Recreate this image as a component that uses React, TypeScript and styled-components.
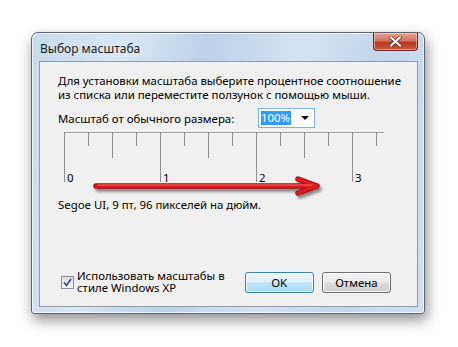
import styled, { createGlobalStyle } from "styled-components";

const GlobalStyle = createGlobalStyle`
  html, body {
    margin: 0;
    background: #ffffff;
  }
  body {
    font-family: "Noto Sans", "Open Sans", sans-serif;
    font-size: 11.4px;
    color: #000;
  }
`;

const Desktop = styled.div`
  width: 458px;
  height: 347px;
  box-sizing: border-box;
  padding: 32px 0 0 31px;
  overflow: hidden;
`;

const Window = styled.div`
  width: 394px;
  height: 282px;
  box-sizing: border-box;
  display: flex;
  flex-direction: column;
  border: 1px solid #5c6672;
  border-radius: 7px 7px 3px 3px;
  background: linear-gradient(
    100deg,
    #c9d9ea 0%,
    #dbe7f3 22%,
    #bcd0e6 40%,
    #d6e3f1 62%,
    #c3d5e9 80%,
    #d2e0ef 100%
  );
  box-shadow: inset 0 0 0 1px rgba(255, 255, 255, 0.7),
    2px 6px 14px rgba(0, 0, 0, 0.45);
`;

const TitleBar = styled.div`
  height: 28px;
  display: flex;
  justify-content: space-between;
  align-items: flex-start;
  padding-left: 8px;
`;

const Title = styled.span`
  margin-top: 7px;
  font-size: 12px;
  color: #1e1e1e;
`;

const CloseButton = styled.div`
  width: 45px;
  height: 18px;
  margin-right: 6px;
  box-sizing: border-box;
  border: 1px solid #6e2a26;
  border-top: none;
  border-radius: 0 0 4px 4px;
  background: linear-gradient(#e4a497 0%, #d1735f 45%, #b73a22 55%, #c8553b 100%);
  box-shadow: inset 0 0 0 1px rgba(255, 220, 210, 0.5);
  display: flex;
  align-items: center;
  justify-content: center;
`;

const Client = styled.div`
  flex: 1;
  margin: 0 6px 6px 7px;
  border: 1px solid #8b9cb4;
  background: #f0f0f0;
  display: flex;
  flex-direction: column;
  padding: 12px 18px 12px 18px;
  white-space: nowrap;
`;

const Paragraph = styled.div`
  line-height: 14px;
`;

const ScaleRow = styled.div`
  display: flex;
  align-items: center;
  margin-top: 6px;
  height: 20px;
`;

const ScaleLabel = styled.span`
  width: 200px;
`;

const Combo = styled.div`
  width: 57px;
  height: 20px;
  box-sizing: border-box;
  border: 1px solid #7eb4ea;
  background: #fff;
  display: flex;
  align-items: center;
  padding-left: 2px;
`;

const Selected = styled.span`
  background: #3399ff;
  color: #fff;
  line-height: 14px;
  padding-right: 1px;
`;

const DropArrow = styled.span`
  margin-left: auto;
  margin-right: 5px;
  width: 0;
  height: 0;
  border-left: 4px solid transparent;
  border-right: 4px solid transparent;
  border-top: 4px solid #000;
`;

const RulerArea = styled.div`
  position: relative;
  margin: 4px 0 0 6px;
  height: 65px;
`;

const ArrowOverlay = styled.svg`
  position: absolute;
  left: 28px;
  top: 42px;
`;

const Info = styled.div`
  line-height: 15px;
`;

const Spacer = styled.div`
  flex: 1;
`;

const BottomRow = styled.div`
  display: flex;
  align-items: center;
`;

const CheckLabel = styled.label`
  display: flex;
  align-items: center;
  gap: 3px;
  width: 191px;
  margin-left: 3px;
`;

const CheckText = styled.div`
  display: flex;
  flex-direction: column;
  line-height: 12px;
`;

const CheckBox = styled.span`
  width: 13px;
  height: 13px;
  box-sizing: border-box;
  flex-shrink: 0;
  border: 1px solid #8e8f9f;
  background: linear-gradient(#dcdde4, #f6f6f8);
  display: flex;
  align-items: center;
  justify-content: center;
`;

const Button = styled.button<{ $default?: boolean }>`
  width: 72px;
  height: 21px;
  margin-right: 8px;
  font-family: inherit;
  font-size: 11.4px;
  color: #000;
  border-radius: 3px;
  border: 1px solid ${(p) => (p.$default ? "#3c7fb1" : "#707070")};
  background: ${(p) =>
    p.$default
      ? "linear-gradient(#eaf6fd 0%, #d9f0fc 49%, #bee6fd 51%, #a7d9f5 100%)"
      : "linear-gradient(#f2f2f2 0%, #ebebeb 49%, #dddddd 51%, #cfcfcf 100%)"};
  box-shadow: inset 0 0 0 1px rgba(255, 255, 255, 0.8);
  padding: 0;
`;

const ticks = Array.from({ length: 14 }, (_, i) => i);

function Ruler() {
  return (
    <svg width="322" height="60">
      <line x1="0" y1="0.5" x2="320" y2="0.5" stroke="#a4a4a4" />
      {ticks.map((i) => {
        const x = i * 24 + 0.5;
        const h = i % 4 === 0 ? 50 : i % 2 === 0 ? 26 : 14;
        return <line key={i} x1={x} y1="0" x2={x} y2={h} stroke="#8e8e8e" />;
      })}
      {[0, 1, 2, 3].map((n) => (
        <text
          key={n}
          x={n * 96 + 3}
          y="50"
          fontSize="11.4"
          fontFamily="Noto Sans, sans-serif"
          fill="#000"
        >
          {n}
        </text>
      ))}
    </svg>
  );
}

function Arrow() {
  return (
    <ArrowOverlay width="240" height="30">
      <defs>
        <filter id="sh" x="-10%" y="-50%" width="120%" height="200%">
          <feDropShadow dx="2" dy="3" stdDeviation="1.6" floodColor="#000" floodOpacity="0.45" />
        </filter>
      </defs>
      <g filter="url(#sh)" fill="none" strokeLinecap="round" strokeLinejoin="round">
        <path d="M4 12 H224 M206 5 L225 12 L206 19" stroke="#a00c10" strokeWidth="5.5" />
        <path d="M4 12 H224 M206 5 L225 12 L206 19" stroke="#dd1a1e" strokeWidth="3.5" />
        <path d="M6 11 H220" stroke="#f06a6a" strokeWidth="1" />
      </g>
    </ArrowOverlay>
  );
}

export default function App() {
  return (
    <>
      <GlobalStyle />
      <Desktop>
        <Window>
          <TitleBar>
            <Title>Выбор масштаба</Title>
            <CloseButton>
              <svg width="13" height="11" viewBox="0 0 13 11">
                <path d="M2 1.5 L11 9.5 M11 1.5 L2 9.5" stroke="#5a2118" strokeWidth="3.6" strokeLinecap="square" />
                <path d="M2 1.5 L11 9.5 M11 1.5 L2 9.5" stroke="#ffffff" strokeWidth="2.2" strokeLinecap="square" />
              </svg>
            </CloseButton>
          </TitleBar>
          <Client>
            <Paragraph>
              Для установки масштаба выберите процентное соотношение
              <br />
              из списка или переместите ползунок с помощью мыши.
            </Paragraph>
            <ScaleRow>
              <ScaleLabel>Масштаб от обычного размера:</ScaleLabel>
              <Combo>
                <Selected>100%</Selected>
                <DropArrow />
              </Combo>
            </ScaleRow>
            <RulerArea>
              <Ruler />
              <Arrow />
            </RulerArea>
            <Info>Segoe UI, 9 пт, 96 пикселей на дюйм.</Info>
            <Spacer />
            <BottomRow>
              <CheckLabel>
                <CheckBox>
                  <svg width="9" height="9" viewBox="0 0 9 9">
                    <path d="M1 4.5 L3.5 7.5 L8 1" stroke="#2a4c8e" strokeWidth="1.6" fill="none" />
                  </svg>
                </CheckBox>
                <CheckText>
                  <span>Использовать масштабы в</span>
                  <span>стиле Windows XP</span>
                </CheckText>
              </CheckLabel>
              <Button $default>OK</Button>
              <Button>Отмена</Button>
            </BottomRow>
          </Client>
        </Window>
      </Desktop>
    </>
  );
}
